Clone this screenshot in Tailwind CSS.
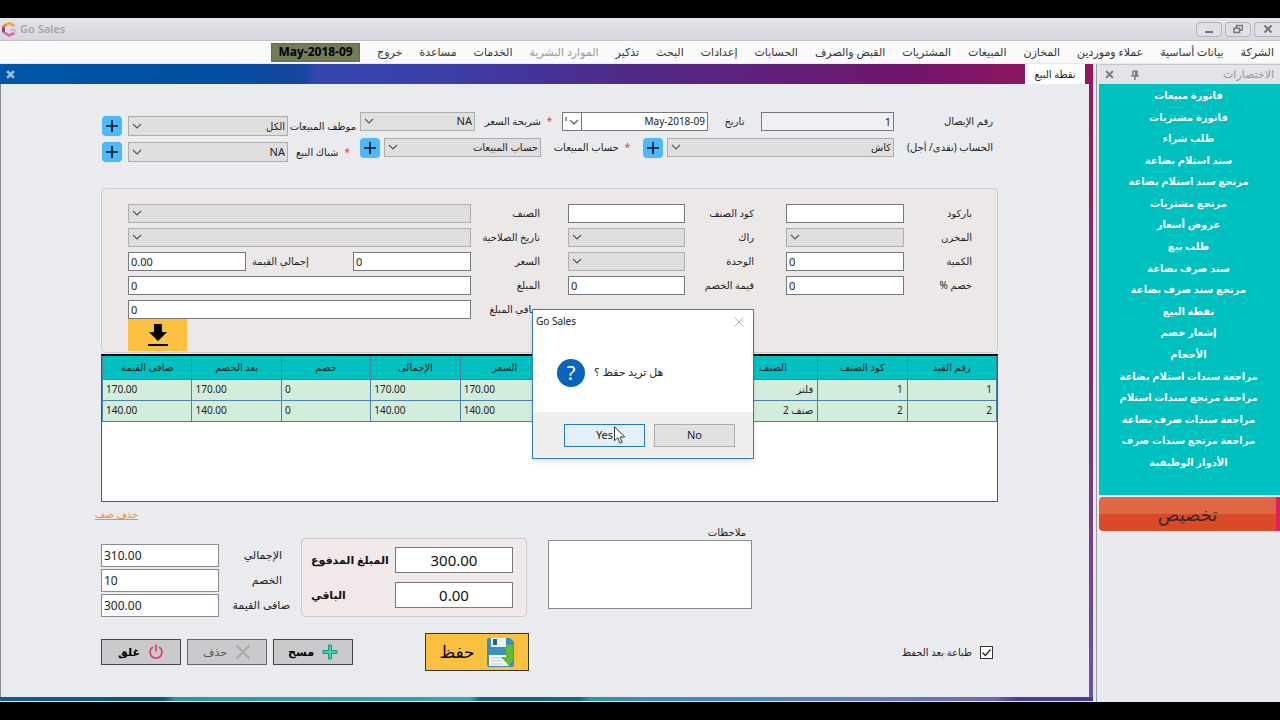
<!DOCTYPE html>
<html lang="ar" dir="rtl">
  <head>
    <meta charset="UTF-8" />
    <meta name="viewport" content="width=device-width, initial-scale=1.0" />
    <title>Go Sales</title>
    <script src="https://cdn.jsdelivr.net/npm/@tailwindcss/browser@4"></script>
  </head>
  <body class="flex min-h-screen flex-col overflow-x-hidden bg-black pt-[18px] font-['Noto_Sans','DejaVu_Sans',sans-serif] text-[11px] text-[#222]">
    <!-- shared icons -->
    <svg class="hidden">
      <symbol id="chevron" viewBox="0 0 10 6">
        <path d="M1 1l4 4 4-4" fill="none" stroke="#555" stroke-width="1.1" />
      </symbol>
      <symbol id="plus" viewBox="0 0 12 12">
        <path d="M6 0v12M0 6h12" stroke="#0b1a26" stroke-width="1.7" />
      </symbol>
    </svg>

    <!-- title bar -->
    <header dir="ltr" class="flex h-[23px] items-center border-b border-[#c4c5ca] bg-linear-to-b from-[#e4e5ea] to-[#d6d7dd] pl-0.5">
      <svg class="h-[15px] w-[15px]" viewBox="0 0 15 15" fill="none" stroke-width="2.6">
        <path d="M1.500 6.500V4.500L4.500 2.600" stroke="#e0813f" />
        <path d="M4 2.900l3.500-1.700L12.500 4" stroke="#f3a43c" />
        <path d="M1.500 5.500v5" stroke="#7a2c86" />
        <path d="M1.500 10l5.500 3.500L12.500 11" stroke="#e06a9c" />
        <path d="M8 8h4.500v2.500" stroke="#c3bfe4" />
      </svg>
      <h1 class="ml-[3px] text-[11px] font-semibold text-[#a4a5ab]">Go Sales</h1>
      <div class="ml-auto flex gap-[3px]">
        <button aria-label="Minimize" class="flex h-[15px] w-[26px] items-center justify-center rounded-sm border border-[#b3b4ba] bg-[#dfe0e5]">
          <svg class="h-2.5 w-2.5" viewBox="0 0 10 10"><path d="M1 8h8" stroke="#75767c" stroke-width="2" /></svg>
        </button>
        <button aria-label="Restore" class="flex h-[15px] w-[26px] items-center justify-center rounded-sm border border-[#b3b4ba] bg-[#dfe0e5]">
          <svg class="h-2.5 w-2.5" viewBox="0 0 10 10" fill="none" stroke="#75767c" stroke-width="1.6"><path d="M3.500 4V1.500h6V6H7M1 4.200h5.500v4.300H1z" /></svg>
        </button>
        <button aria-label="Close" class="flex h-[15px] w-[26px] items-center justify-center rounded-l-sm border border-r-0 border-[#b3b4ba] bg-[#dfe0e5]">
          <svg class="h-2.5 w-2.5" viewBox="0 0 10 10"><path d="M1.500 1.500l7 7M8.500 1.500l-7 7" stroke="#75767c" stroke-width="2" /></svg>
        </button>
      </div>
    </header>

    <!-- menu -->
    <nav class="flex h-[22px] items-center gap-[17px] bg-[#fafafa] ps-1.5 text-[11px] whitespace-nowrap text-[#333]">
      <a href="#">الشركة</a>
      <a href="#">بيانات أساسية</a>
      <a href="#">عملاء وموردين</a>
      <a href="#">المخازن</a>
      <a href="#">المبيعات</a>
      <a href="#">المشتريات</a>
      <a href="#">القبض والصرف</a>
      <a href="#">الحسابات</a>
      <a href="#">إعدادات</a>
      <a href="#">البحث</a>
      <a href="#">تذكير</a>
      <a href="#" class="text-[#999]">الموارد البشرية</a>
      <a href="#">الخدمات</a>
      <a href="#">مساعدة</a>
      <a href="#">خروج</a>
      <span dir="ltr" class="-ms-3.5 flex h-[19px] w-[89px] items-center justify-center border border-[#666d4c] bg-[#737c54] text-[12px] font-bold text-black">May-2018-09</span>
    </nav>

    <div class="flex grow bg-[#e9eaee] pt-px">
      <!-- shortcuts -->
      <aside class="flex w-[184px] shrink-0 flex-col border-e border-[#9a9ba1] pe-0.5">
        <div class="flex h-5 items-center border-t border-[#c4c5ca] bg-[#e3e4e9] ps-1.5">
          <h2 class="text-[11px] text-[#96979d]">الاختصارات</h2>
          <svg class="ms-auto h-2.5 w-2.5" viewBox="0 0 10 10" fill="none" stroke="#66676d" stroke-width="1.2"><path d="M3 1h4v5H3zM5.700 1v5M1 6h8M5 6v4" /></svg>
          <button aria-label="إغلاق الاختصارات" class="ms-4 me-1.5">
            <svg class="h-[9px] w-[9px]" viewBox="0 0 8 8"><path d="M1 1l6 6M7 1L1 7" stroke="#75767c" stroke-width="1.800" /></svg>
          </button>
        </div>
        <ul class="flex h-[411px] flex-col justify-between bg-[#00c0c0] ps-0.5 pt-px pb-[22px] text-center text-[10px] leading-[21px] font-bold text-white">
          <li><a href="#">فاتورة مبيعات</a></li>
          <li><a href="#">فاتورة مشتريات</a></li>
          <li><a href="#">طلب شراء</a></li>
          <li><a href="#">سند استلام بضاعة</a></li>
          <li><a href="#">مرتجع سند استلام بضاعة</a></li>
          <li><a href="#">مرتجع مشتريات</a></li>
          <li><a href="#">عروض أسعار</a></li>
          <li><a href="#">طلب بيع</a></li>
          <li><a href="#">سند صرف بضاعة</a></li>
          <li><a href="#">مرتجع سند صرف بضاعة</a></li>
          <li><a href="#">نقطة البيع</a></li>
          <li><a href="#">إشعار خصم</a></li>
          <li><a href="#">الأحجام</a></li>
          <li><a href="#">مراجعة سندات استلام بضاعة</a></li>
          <li><a href="#">مراجعة مرتجع سندات استلام</a></li>
          <li><a href="#">مراجعة سندات صرف بضاعة</a></li>
          <li><a href="#">مراجعة مرتجع سندات صرف</a></li>
          <li><a href="#">الأدوار الوظيفية</a></li>
        </ul>
        <button class="mt-0.5 h-[34px] rounded-e border-s-4 border-[#e0205c] bg-linear-to-b from-[#df6746] from-50% to-[#da4a28] to-50% text-[18px] text-[#3a2a2a]">تخصيص</button>
      </aside>

      <!-- document area -->
      <div class="flex min-w-0 grow flex-col ps-[3px]">
        <div class="flex h-5 items-stretch bg-[linear-gradient(100deg,#0057a8_0%,#004fa0_20%,#1a45a0_28%,#3447ae_29%,#3b3fa8_40%,#4f2a88_57%,#621f78_72%,#70156c_83%,#951660_96%)] ps-2">
          <button class="w-[60px] bg-white text-[10px]">نقطة البيع</button>
          <button aria-label="إغلاق" class="ms-auto me-1.5">
            <svg class="h-[9px] w-[9px]" viewBox="0 0 8 8"><path d="M1 1l6 6M7 1L1 7" stroke="#a9bdd6" stroke-width="2.400" /></svg>
          </button>
        </div>
        <div class="grow bg-linear-to-b from-[#951660] via-[#7d2d6c] to-[#6b4fae] ps-1">
          <main class="h-full border-e border-[#8a8b91] bg-[#eaebef] ps-[91px] pe-[100px] pt-7 pb-[26px]">
            <!-- receipt header -->
            <section class="flex gap-1 ps-[5px] text-[10px]">
              <div class="flex min-w-0 grow flex-col gap-[7px]">
                <div class="flex h-[19px] items-center">
                  <label for="receipt" class="w-[99px]">رقم الإيصال</label>
                  <input id="receipt" value="1" class="h-[19px] w-[133px] border border-[#77787e] bg-[#eff0f4] px-0.5 text-[11px]" />
                  <label for="date" class="w-[53px] text-center">تاريخ</label>
                  <div class="flex h-[19px] w-[146px] border border-[#77787e] bg-white">
                    <input id="date" dir="ltr" value="May-2018-09" class="min-w-0 grow pe-0.5 text-right text-[10px]" />
                    <button aria-label="التقويم" class="flex w-[19px] shrink-0 items-center justify-center gap-0.5 border-s border-[#77787e]">
                      <svg class="h-1.5 w-2.5"><use href="#chevron" /></svg>
                      <svg class="h-2.5 w-0.5" viewBox="0 0 2 10"><path d="M1 0v4" stroke="#333" /></svg>
                    </button>
                  </div>
                  <label for="tier" class="flex w-[87px] justify-center gap-1.5"><span class="text-red-500">*</span>شريحة السعر</label>
                  <div class="relative h-[19px] min-w-0 grow">
                    <select id="tier" class="h-full w-full appearance-none border border-[#adadad] bg-[#e0e0e1] ps-0.5 text-[11px]"><option>NA</option></select>
                    <svg class="absolute end-1 top-1.5 h-1.5 w-2.5"><use href="#chevron" /></svg>
                  </div>
                </div>
                <div class="flex h-[19px] items-center">
                  <label for="account" class="w-[99px] whitespace-nowrap">الحساب (نقدى/ أجل)</label>
                  <div class="relative h-[19px] w-[227px]">
                    <select id="account" class="h-full w-full appearance-none border border-[#adadad] bg-[#dfdfdf] ps-0.5 text-[10px]"><option>كاش</option></select>
                    <svg class="absolute end-1 top-1.5 h-1.5 w-2.5"><use href="#chevron" /></svg>
                  </div>
                  <button aria-label="إضافة حساب" class="ms-1 flex h-5 w-5 items-center justify-center rounded bg-[#4db8fa]"><svg class="h-3 w-3"><use href="#plus" /></svg></button>
                  <label for="sales-account" class="flex w-[102px] justify-center gap-1.5"><span class="text-red-500">*</span>حساب المبيعات</label>
                  <div class="relative h-[19px] min-w-0 grow">
                    <select id="sales-account" class="h-full w-full appearance-none border border-[#adadad] bg-[#dfdfdf] ps-0.5 text-[10px]"><option>حساب المبيعات</option></select>
                    <svg class="absolute end-1 top-1.5 h-1.5 w-2.5"><use href="#chevron" /></svg>
                  </div>
                  <button aria-label="إضافة حساب مبيعات" class="ms-1 flex h-5 w-5 items-center justify-center rounded bg-[#4db8fa]"><svg class="h-3 w-3"><use href="#plus" /></svg></button>
                </div>
              </div>
              <div class="mt-1 flex w-[255px] flex-col gap-1.5">
                <div class="flex h-5 items-center">
                  <label for="employee" class="w-[68px] whitespace-nowrap">موظف المبيعات</label>
                  <div class="relative h-5 w-[160px]">
                    <select id="employee" class="h-full w-full appearance-none border border-[#adadad] bg-[#dfdfdf] ps-0.5 text-[10px]"><option>الكل</option></select>
                    <svg class="absolute end-1 top-[7px] h-1.5 w-2.5"><use href="#chevron" /></svg>
                  </div>
                  <button aria-label="إضافة موظف" class="ms-1.5 flex h-5 w-5 items-center justify-center rounded bg-[#4db8fa]"><svg class="h-3 w-3"><use href="#plus" /></svg></button>
                </div>
                <div class="flex h-5 items-center">
                  <label for="window" class="flex w-[68px] gap-1.5 ps-1.5 whitespace-nowrap"><span class="text-red-500">*</span>شباك البيع</label>
                  <div class="relative h-5 w-[160px]">
                    <select id="window" class="h-full w-full appearance-none border border-[#adadad] bg-[#dfdfdf] ps-0.5 text-[11px]"><option>NA</option></select>
                    <svg class="absolute end-1 top-[7px] h-1.5 w-2.5"><use href="#chevron" /></svg>
                  </div>
                  <button aria-label="إضافة شباك" class="ms-1.5 flex h-5 w-5 items-center justify-center rounded bg-[#4db8fa]"><svg class="h-3 w-3"><use href="#plus" /></svg></button>
                </div>
              </div>
            </section>

            <!-- item entry -->
            <section class="mt-[26px] rounded-sm border border-[#cccccf] bg-[#ede8e8] ps-[25px] pe-[26px] pt-[15px] pb-px text-[10px]">
              <div class="grid auto-rows-[19px] grid-cols-[68px_118px_101px_117px_97px_1fr] items-center gap-y-[5px]">
                <label for="barcode">باركود</label>
                <input id="barcode" dir="ltr" class="h-[19px] border border-[#77787e] bg-white px-0.5" />
                <label for="item-code" class="ps-8">كود الصنف</label>
                <input id="item-code" dir="ltr" class="h-[19px] border border-[#77787e] bg-white px-0.5" />
                <label for="item" class="ps-7">الصنف</label>
                <div class="relative h-[19px]">
                  <select id="item" class="h-full w-full appearance-none border border-[#adadad] bg-[#dfdddd]"></select>
                  <svg class="absolute end-1 top-1.5 h-1.5 w-2.5"><use href="#chevron" /></svg>
                </div>

                <label for="store">المخزن</label>
                <div class="relative h-[19px]">
                  <select id="store" class="h-full w-full appearance-none border border-[#adadad] bg-[#dfdddd]"></select>
                  <svg class="absolute end-1 top-1.5 h-1.5 w-2.5"><use href="#chevron" /></svg>
                </div>
                <label for="rack" class="ps-8">راك</label>
                <div class="relative h-[19px]">
                  <select id="rack" class="h-full w-full appearance-none border border-[#adadad] bg-[#dfdddd]"></select>
                  <svg class="absolute end-1 top-1.5 h-1.5 w-2.5"><use href="#chevron" /></svg>
                </div>
                <label for="expiry" class="ps-7 whitespace-nowrap">تاريخ الصلاحية</label>
                <div class="relative h-[19px]">
                  <select id="expiry" class="h-full w-full appearance-none border border-[#adadad] bg-[#dfdddd]"></select>
                  <svg class="absolute end-1 top-1.5 h-1.5 w-2.5"><use href="#chevron" /></svg>
                </div>

                <label for="qty">الكمية</label>
                <input id="qty" dir="ltr" value="0" class="h-[19px] border border-[#77787e] bg-white px-0.5 text-[11px]" />
                <label for="unit" class="ps-8">الوحدة</label>
                <div class="relative h-[19px]">
                  <select id="unit" class="h-full w-full appearance-none border border-[#adadad] bg-[#dfdddd]"></select>
                  <svg class="absolute end-1 top-1.5 h-1.5 w-2.5"><use href="#chevron" /></svg>
                </div>
                <label for="price" class="ps-7">السعر</label>
                <div class="flex items-center">
                  <input id="price" dir="ltr" value="0" class="h-[19px] w-[118px] border border-[#77787e] bg-white px-0.5 text-[11px]" />
                  <label for="gross" class="ms-auto me-1.5">إجمالي القيمة</label>
                  <input id="gross" dir="ltr" value="0.00" class="h-[19px] w-[118px] border border-[#77787e] bg-white px-0.5 text-[11px]" />
                </div>

                <label for="discount">خصم %</label>
                <input id="discount" dir="ltr" value="0" class="h-[19px] border border-[#77787e] bg-white px-0.5 text-[11px]" />
                <label for="discount-value" class="ps-8">قيمة الخصم</label>
                <input id="discount-value" dir="ltr" value="0" class="h-[19px] border border-[#77787e] bg-white px-0.5 text-[11px]" />
                <label for="amount" class="ps-7">المبلغ</label>
                <input id="amount" dir="ltr" value="0" class="h-[19px] border border-[#77787e] bg-white px-0.5 text-[11px]" />

                <label for="net-amount" class="col-start-5 ps-7">صافي المبلغ</label>
                <input id="net-amount" dir="ltr" value="0" class="h-[19px] border border-[#77787e] bg-white px-0.5 text-[11px]" />
              </div>
              <button aria-label="إضافة الصنف" class="ms-auto flex h-8 w-[59px] items-center justify-center bg-[#fbc040]">
                <svg class="h-[22px] w-5" viewBox="0 0 20 22"><path d="M6 0h8v8h5l-9 9-9-9h5zM0 20h20v2H0z" fill="#000" /></svg>
              </button>
            </section>

            <!-- invoice lines -->
            <div class="mt-px min-h-[148px] border border-t-2 border-[#55565c] border-t-black bg-white">
              <table class="w-full table-fixed border-collapse text-[10px]">
                <thead class="bg-[#00c0c0]">
                  <tr class="h-[23px]">
                    <th class="border border-[#4a82a8] border-t-0 font-normal">رقم القيد</th>
                    <th class="border border-[#4a82a8] border-t-0 font-normal">كود الصنف</th>
                    <th class="border border-[#4a82a8] border-t-0 font-normal">الصنف</th>
                    <th class="border border-[#4a82a8] border-t-0"></th>
                    <th class="border border-[#4a82a8] border-t-0"></th>
                    <th class="border border-[#4a82a8] border-t-0 font-normal">السعر</th>
                    <th class="border border-[#4a82a8] border-t-0 font-normal">الإجمالي</th>
                    <th class="border border-[#4a82a8] border-t-0 font-normal">خصم</th>
                    <th class="border border-[#4a82a8] border-t-0 font-normal">بعد الخصم</th>
                    <th class="border border-[#4a82a8] border-t-0 font-normal">صافي القيمة</th>
                  </tr>
                </thead>
                <tbody class="bg-[#d3ecdc]">
                  <tr class="h-[21px]">
                    <td class="border border-[#4a82b0] px-1">1</td>
                    <td class="border border-[#4a82b0] px-1">1</td>
                    <td class="border border-[#4a82b0] px-1">فلتر</td>
                    <td class="border border-[#4a82b0] px-1"></td>
                    <td class="border border-[#4a82b0] px-1"></td>
                    <td class="border border-[#4a82b0] px-[3px] text-left">170.00</td>
                    <td class="border border-[#4a82b0] px-[3px] text-left">170.00</td>
                    <td class="border border-[#4a82b0] px-[3px] text-left">0</td>
                    <td class="border border-[#4a82b0] px-[3px] text-left">170.00</td>
                    <td class="border border-[#4a82b0] px-[3px] text-left">170.00</td>
                  </tr>
                  <tr class="h-[21px]">
                    <td class="border border-[#4a82b0] px-1">2</td>
                    <td class="border border-[#4a82b0] px-1">2</td>
                    <td class="border border-[#4a82b0] px-1">صنف 2</td>
                    <td class="border border-[#4a82b0] px-1"></td>
                    <td class="border border-[#4a82b0] px-1"></td>
                    <td class="border border-[#4a82b0] px-[3px] text-left">140.00</td>
                    <td class="border border-[#4a82b0] px-[3px] text-left">140.00</td>
                    <td class="border border-[#4a82b0] px-[3px] text-left">0</td>
                    <td class="border border-[#4a82b0] px-[3px] text-left">140.00</td>
                    <td class="border border-[#4a82b0] px-[3px] text-left">140.00</td>
                  </tr>
                </tbody>
              </table>
            </div>
            <div class="mt-1 -me-1.5 text-left text-[10px] leading-4">
              <a href="#" class="text-[#ec922e] underline">حذف صف</a>
            </div>

            <!-- notes, payment and totals -->
            <section class="mt-0.5 flex items-end justify-end">
              <div class="me-[21px] flex w-[204px] flex-col pb-2 text-[10px]">
                <label for="notes" class="ps-1.5 leading-4">ملاحظات</label>
                <textarea id="notes" class="h-[69px] resize-none border border-[#8a8b91] bg-white p-1"></textarea>
              </div>
              <div class="flex w-[226px] flex-col gap-[9px] rounded-sm border border-[#cfc9ce] bg-[#f1e8ea] py-2 ps-[13px] pe-[9px] text-[11px] font-bold text-[#111]">
                <div class="flex items-center">
                  <input id="paid" dir="ltr" value="300.00" class="h-[26px] w-[118px] border border-[#77787e] bg-white text-center text-[15px] font-normal" />
                  <label for="paid" class="grow text-left whitespace-nowrap">المبلغ المدفوع</label>
                </div>
                <div class="flex items-center">
                  <input id="rest" dir="ltr" value="0.00" class="h-[26px] w-[118px] border border-[#77787e] bg-white text-center text-[15px] font-normal" />
                  <label for="rest" class="grow text-left whitespace-nowrap">الباقي</label>
                </div>
              </div>
              <div class="ms-[11px] flex w-[189px] flex-col gap-0.5 text-[11px]">
                <div class="flex items-center">
                  <label for="total" class="grow ps-2">الإجمالي</label>
                  <input id="total" dir="ltr" value="310.00" class="h-[23px] w-[118px] border border-[#8a8b91] bg-white px-0.5 text-[12px]" />
                </div>
                <div class="flex items-center">
                  <label for="total-discount" class="grow ps-2">الخصم</label>
                  <input id="total-discount" dir="ltr" value="10" class="h-[23px] w-[118px] border border-[#8a8b91] bg-white px-0.5 text-[12px]" />
                </div>
                <div class="flex items-center">
                  <label for="net" class="grow">صافى القيمة</label>
                  <input id="net" dir="ltr" value="300.00" class="h-[23px] w-[118px] border border-[#8a8b91] bg-white px-0.5 text-[12px]" />
                </div>
              </div>
            </section>

            <!-- actions -->
            <section class="mt-4 flex items-center gap-1.5">
              <label class="flex items-center gap-2 ps-[5px] text-[10px]">
                <span class="relative flex">
                  <input type="checkbox" checked class="h-[13px] w-[13px] appearance-none border border-[#333] bg-white" />
                  <svg class="absolute start-0.5 top-0.5 h-[9px] w-[9px]" viewBox="0 0 9 9"><path d="M0.500 4.500l2.800 3L8.500 1.500" fill="none" stroke="#222" stroke-width="1.2" /></svg>
                </span>
                طباعة بعد الحفظ
              </label>
              <button class="ms-auto me-[66px] flex h-[38px] w-[104px] items-center justify-center gap-3 border border-[#3a3529] bg-[#fbc040] text-[17px] text-black">
                <svg class="h-[29px] w-7" viewBox="0 0 28 29">
                  <path d="M2 0h21l4 4v23a2 2 0 0 1-2 2H2a2 2 0 0 1-2-2V2a2 2 0 0 1 2-2z" fill="#3a8fc0" />
                  <path d="M4 0h15v9H4z" fill="#e9f1f5" />
                  <path d="M6 1h4v6H6z" fill="#2a5f86" />
                  <path d="M2 17h20v11H2z" fill="#f8f8f8" />
                  <path d="M4 20h12M4 23h12M4 26h12" stroke="#b9c4ca" />
                  <path d="M19 7h7v12h2l-6 9-8-9h5z" fill="#63bb34" />
                </svg>
                حفظ
              </button>
              <button class="flex h-[26px] w-20 items-center justify-center gap-2 border border-[#44454b] bg-[#cacacc] text-[11px] font-semibold text-black">
                <svg class="h-4 w-4" viewBox="0 0 16 16"><path d="M6.500 1h3v5.500H15v3H9.500V15h-3V9.500H1v-3h5.500z" fill="#3fcfb4" stroke="#2b8f80" /></svg>
                مسح
              </button>
              <button class="flex h-[26px] w-20 items-center justify-center gap-2 border border-[#66676d] bg-[#cacacc] text-[11px] text-[#555]">
                <svg class="h-4 w-4" viewBox="0 0 16 16"><path d="M1.500 1.500l13 13M14.500 1.500l-13 13" stroke="#a9a9ac" stroke-width="2" /></svg>
                حذف
              </button>
              <button class="flex h-[26px] w-20 items-center justify-center gap-2 border border-[#44454b] bg-[#cacacc] text-[11px] font-semibold text-black">
                <svg class="h-4 w-4" viewBox="0 0 16 16" fill="none" stroke="#e0436e" stroke-width="1.800"><path d="M5 3a6 6 0 1 0 6 0M8 0.500v7" /></svg>
                غلق
              </button>
            </section>
          </main>
        </div>
        <div class="h-[5px] border-b border-[#dfe3ea] bg-[linear-gradient(90deg,#0c5f86_0%,#0b5a72_15%,#2f93a8_16%,#3a9fb0_43%,#0f6478_44%,#116a7c_53%,#2f93a8_54%,#5f80b8_78%,#6f68b4_91%,#4b3a98_93%)]"></div>
      </div>
    </div>
    <div class="h-[18px] shrink-0 bg-black"></div>

    <!-- confirm dialog -->
    <div role="dialog" dir="ltr" class="absolute top-[309px] left-[532px] w-[222px] border border-[#2f7dbd] bg-white text-[#222] shadow-md">
      <div class="flex h-[23px] items-center justify-between pr-[9px] pl-[3px]">
        <span class="text-[10px]">Go Sales</span>
        <button aria-label="Close"><svg class="h-2.5 w-2.5" viewBox="0 0 10 10"><path d="M0.500 0.500l9 9M9.500 0.500l-9 9" stroke="#b5b5b5" /></svg></button>
      </div>
      <div class="flex h-[79px] items-center gap-[9px] pl-6">
        <span class="flex h-7 w-7 items-center justify-center rounded-full bg-[#0a63bd] text-[20px] text-white">?</span>
        <p dir="rtl" class="text-[11px]">هل تريد حفظ ؟</p>
      </div>
      <div class="flex h-[46px] items-center justify-end gap-[9px] bg-[#efefef] pr-[18px]">
        <button class="h-[23px] w-[81px] border border-[#1f78c0] bg-[#e3f0fa] text-[11px]">Yes</button>
        <button class="h-[23px] w-[81px] border border-[#adadad] bg-[#e1e1e1] text-[11px]">No</button>
      </div>
    </div>
    <svg class="absolute top-[426px] left-[614px] h-[18px] w-3" viewBox="0 0 12 18"><path d="M0.500 0.700v14l3.300-3 2.300 5.500 2.200-1-2.300-5.200h4.700z" fill="#fff" stroke="#222" stroke-width="0.900" /></svg>
  </body>
</html>
